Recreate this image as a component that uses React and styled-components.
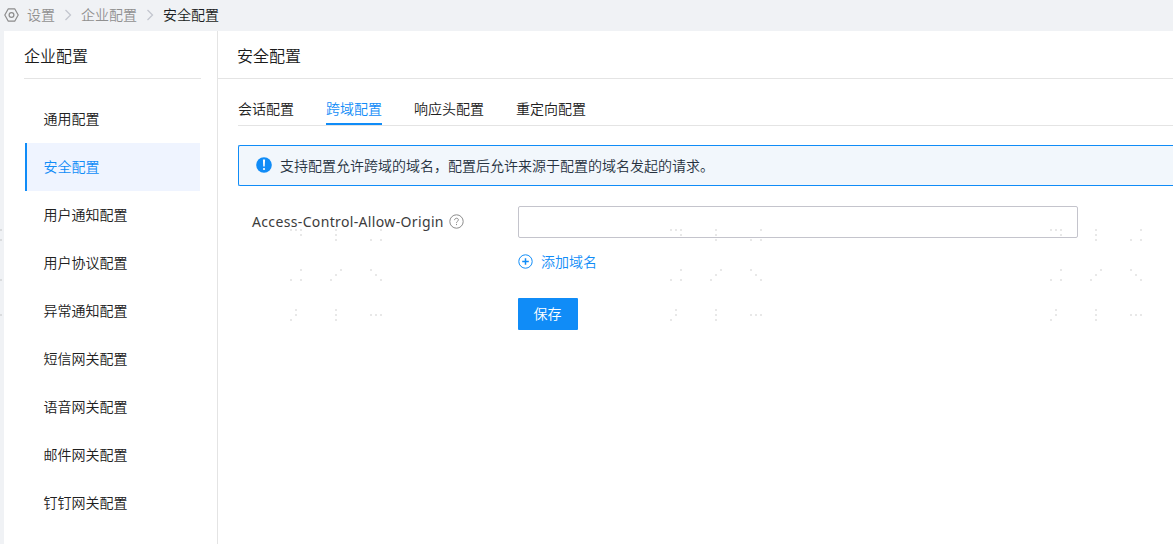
import styled, { createGlobalStyle, css } from 'styled-components'

const GlobalStyle = createGlobalStyle`
  * {
    box-sizing: border-box;
  }

  body {
    margin: 0;
    background: #f0f2f5;
    color: #202020;
    font-family: "Noto Sans", "Noto Sans CJK SC", sans-serif;
    font-size: 14px;
    font-weight: 350;
    overflow: hidden;
  }
`

const Page = styled.div`
  position: relative;
  height: 100vh;
  display: flex;
  flex-direction: column;
  overflow: hidden;
`

const Breadcrumb = styled.nav`
  height: 31px;
  flex: none;
  display: flex;
  align-items: center;
  padding: 0 0 1px 4px;
`

const Crumb = styled.span`
  line-height: 20px;
  color: ${({ $current }) => ($current ? '#1a1d22' : '#909090')};
`

const Separator = styled.svg`
  width: 8px;
  height: 12px;
  margin: 0 9px;
`

const HomeIcon = styled.svg`
  width: 15px;
  height: 14px;
  margin-right: 8px;
`

const Body = styled.div`
  flex: 1;
  display: flex;
  margin-left: 4px;
  background: #fff;
`

const Sidebar = styled.aside`
  width: 214px;
  flex: none;
  padding: 0 16px 0 20px;
  border-right: 1px solid #e4e4e4;
`

const Title = styled.h2`
  height: 48px;
  margin: 0;
  padding-left: ${({ $inset }) => ($inset ? '19px' : '0')};
  border-bottom: 1px solid #e4e4e4;
  color: #1a1a1a;
  font-size: 16px;
  font-weight: 350;
  line-height: 50px;
`

const Menu = styled.ul`
  list-style: none;
  margin: 16px 0 0 1px;
  padding: 0;
`

const MenuItem = styled.li`
  height: 48px;
  width: 175px;
  padding-left: 16.5px;
  border-left: 2px solid transparent;
  line-height: 48px;

  ${({ $active }) =>
    $active &&
    css`
      color: #108cf7;
      background: #eff4ff;
      border-color: #108cf7;
    `}
`

const Main = styled.main`
  flex: 1;
  min-width: 0;
`

const Content = styled.div`
  padding-left: 20px;
`

const Tabs = styled.div`
  display: flex;
  gap: 32px;
  height: 47px;
  border-bottom: 1px solid #e4e4e4;
`

const Tab = styled.div`
  height: 46px;
  padding-top: 15px;
  line-height: 30px;
  border-bottom: 2px solid ${({ $active }) => ($active ? '#108cf7' : 'transparent')};
  color: ${({ $active }) => ($active ? '#108cf7' : 'inherit')};
`

const Notice = styled.div`
  display: flex;
  align-items: center;
  height: 41px;
  margin-top: 19px;
  padding: 0 0 1px 17px;
  border: 1px solid #108cf7;
  border-right: 0;
  border-radius: 2px 0 0 2px;
  background: #f2f7fc;
  color: #26323f;

  svg {
    width: 16px;
    height: 16px;
    margin-right: 8px;
  }
`

const Form = styled.div`
  display: grid;
  grid-template-columns: 266px 560px;
  padding: 20px 0 0 14px;
`

const Label = styled.label`
  display: flex;
  align-items: center;
  height: 31px;
  color: #3c3c3c;
  font-weight: 400;
  letter-spacing: 0.35px;

  svg {
    width: 15px;
    height: 15px;
    margin-left: 5px;
  }
`

const Input = styled.input`
  width: 560px;
  height: 32px;
  padding: 0 11px;
  border: 1px solid #c4c4cc;
  border-radius: 2px;
  background: #fff;
  font: inherit;
  outline: none;
`

const Actions = styled.div`
  grid-column: 2;
  display: flex;
  flex-direction: column;
  align-items: flex-start;
`

const AddButton = styled.button`
  display: flex;
  align-items: center;
  height: 32px;
  margin: 8px 0 20px;
  padding: 0 0 2px;
  border: 0;
  background: none;
  color: #108cf7;
  font: inherit;

  svg {
    width: 15px;
    height: 15px;
    margin: 1px 8px 0 0;
  }
`

const SaveButton = styled.button`
  width: 60px;
  height: 32px;
  padding: 0 1px 2px 0;
  border: 0;
  border-radius: 1px;
  background: #108cf7;
  color: #fff;
  font: inherit;
`

const Watermark = styled.svg`
  position: absolute;
  inset: 0;
  width: 100%;
  height: 100%;
  pointer-events: none;
`

const menu = [
  '通用配置',
  '安全配置',
  '用户通知配置',
  '用户协议配置',
  '异常通知配置',
  '短信网关配置',
  '语音网关配置',
  '邮件网关配置',
  '钉钉网关配置',
]

const tabs = ['会话配置', '跨域配置', '响应头配置', '重定向配置']

// dot positions inside one watermark tile
const dots = [
  [0, 0], [5, 0], [10, 0], [10, 5],
  [45, 0], [45, 5], [45, 10],
  [90, 0], [80, 10], [90, 10],
  [10, 40], [0, 50], [10, 50],
  [50, 40], [45, 45], [40, 50],
  [80, 40], [85, 45], [90, 50],
  [5, 80], [5, 85], [0, 90],
  [45, 80], [45, 85], [45, 90],
  [80, 85], [85, 85], [90, 85],
]

const tiles = [-90, 290, 670, 1050]

const Chevron = () => (
  <Separator viewBox="0 0 8 12" fill="none" stroke="#c3c6cf" strokeWidth="1.3">
    <path d="M1.5 1 6.5 6l-5 5" />
  </Separator>
)

const App = () => (
  <Page>
    <GlobalStyle />
    <Breadcrumb>
      <HomeIcon viewBox="0 0 15 14" fill="none" stroke="#8c8c8c" strokeWidth="1.2">
        <path d="M4.3 .8h6.4L14.2 7l-3.5 6.2H4.3L.8 7Z" strokeLinejoin="round" />
        <circle cx="7.5" cy="7" r="2.4" />
      </HomeIcon>
      <Crumb>设置</Crumb>
      <Chevron />
      <Crumb>企业配置</Crumb>
      <Chevron />
      <Crumb $current>安全配置</Crumb>
    </Breadcrumb>

    <Body>
      <Sidebar>
        <Title>企业配置</Title>
        <Menu>
          {menu.map((item) => (
            <MenuItem key={item} $active={item === '安全配置'}>{item}</MenuItem>
          ))}
        </Menu>
      </Sidebar>

      <Main>
        <Title $inset>安全配置</Title>
        <Content>
          <Tabs>
            {tabs.map((tab) => (
              <Tab key={tab} $active={tab === '跨域配置'}>{tab}</Tab>
            ))}
          </Tabs>

          <Notice>
            <svg viewBox="0 0 16 16">
              <circle cx="8" cy="8" r="7.8" fill="#108cf7" />
              <path d="M6.9 2.6h2.2l-.4 7H7.3Z" fill="#fff" />
              <circle cx="8" cy="12" r="1.1" fill="#fff" />
            </svg>
            支持配置允许跨域的域名，配置后允许来源于配置的域名发起的请求。
          </Notice>

          <Form>
            <Label htmlFor="origin">
              Access-Control-Allow-Origin
              <svg viewBox="0 0 15 15" fill="none" stroke="#8c8c8c">
                <circle cx="7.5" cy="7.5" r="6.7" />
                <path d="M5.6 6.1c0-2.5 3.8-2.4 3.8-.2 0 1.3-1.9 1.5-1.9 2.9" />
                <path d="M7.5 9.9v1.2" />
              </svg>
            </Label>
            <Input id="origin" />
            <Actions>
              <AddButton>
                <svg viewBox="0 0 15 15" fill="none" stroke="#108cf7">
                  <circle cx="7.5" cy="7.5" r="6.7" />
                  <path d="M7.5 4.2v6.6M4.2 7.5h6.6" strokeWidth="1.5" />
                </svg>
                添加域名
              </AddButton>
              <SaveButton>保存</SaveButton>
            </Actions>
          </Form>
        </Content>
      </Main>
    </Body>

    <Watermark fill="#000" fillOpacity="0.09" shapeRendering="crispEdges">
      {tiles.map((x) => (
        <g key={x} transform={`translate(${x} 229)`}>
          {dots.map(([dx, dy]) => (
            <rect key={`${dx}-${dy}`} x={dx} y={dy} width="2" height="2" />
          ))}
        </g>
      ))}
    </Watermark>
  </Page>
)

export default App
